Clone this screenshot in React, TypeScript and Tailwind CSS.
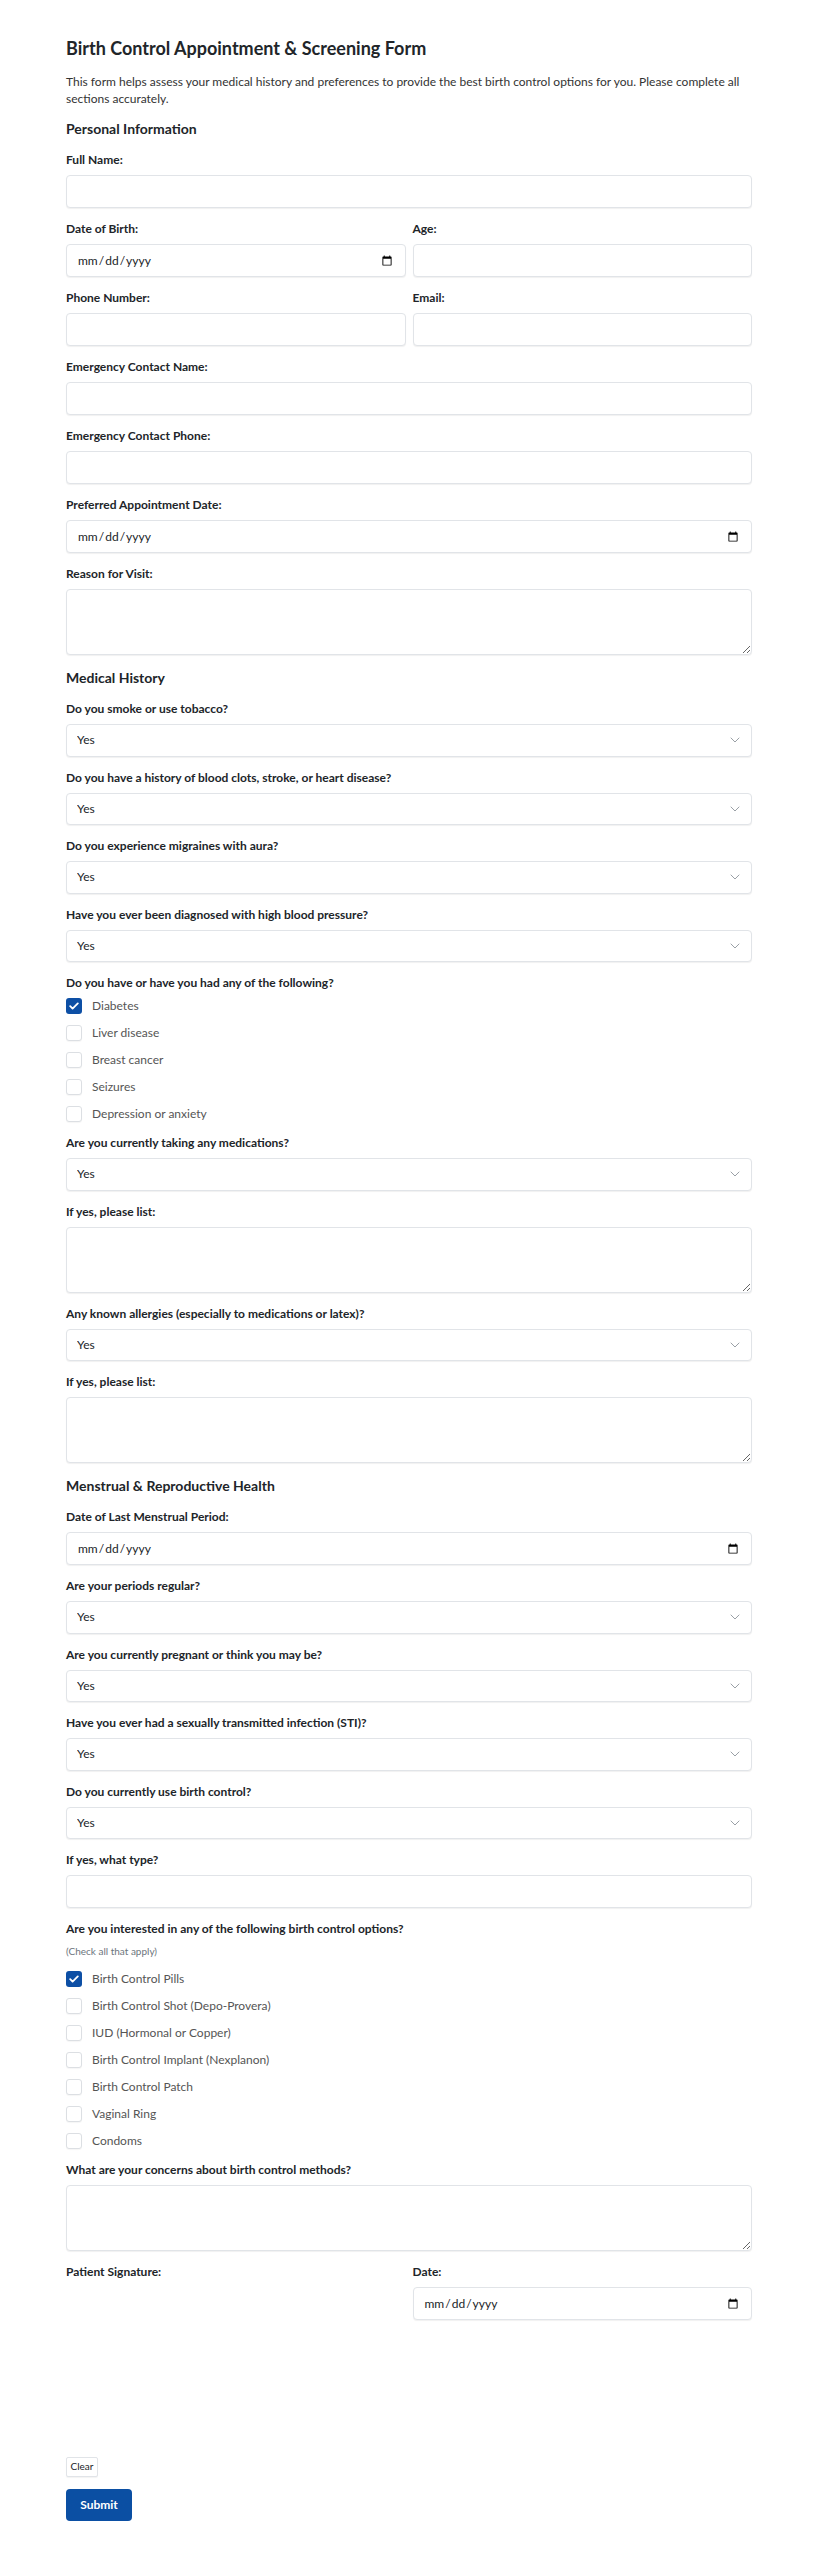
import React from 'react';

const fieldCls =
  'block w-full rounded-[4px] border border-[#e1e4e8] bg-white px-[10px] text-[12px] text-[#212529] shadow-[0_1px_1px_rgba(0,0,0,0.06)] outline-none';

function Label({ children }: { children: React.ReactNode }) {
  return <label className="block mb-[6px] text-[12px] leading-[18px] font-bold text-[#212529]">{children}</label>;
}

function TextField({ label, type = 'text' }: { label: string; type?: string }) {
  return (
    <div>
      <Label>{label}</Label>
      <input type={type} className={fieldCls + ' h-[33px]'} />
    </div>
  );
}

function TextArea({ label }: { label: string }) {
  return (
    <div>
      <Label>{label}</Label>
      <textarea className={fieldCls + ' h-[66px] py-[6px]'} />
    </div>
  );
}

function SelectField({ label }: { label: string }) {
  return (
    <div>
      <Label>{label}</Label>
      <div className="relative">
        <select defaultValue="Yes" className={fieldCls + ' h-[32.5px] appearance-none pr-8'}>
          <option>Yes</option>
          <option>No</option>
        </select>
        <svg
          className="pointer-events-none absolute right-[12px] top-1/2 -translate-y-1/2"
          width="10"
          height="6"
          viewBox="0 0 10 6"
          fill="none"
        >
          <path d="M1 1l4 4 4-4" stroke="#9aa0a6" strokeWidth="1" strokeLinecap="round" strokeLinejoin="round" />
        </svg>
      </div>
    </div>
  );
}

function Check({ label, checked = false }: { label: string; checked?: boolean }) {
  return (
    <div className="flex items-center h-[16px] gap-[10px]">
      {checked ? (
        <span className="flex items-center justify-center w-[16px] h-[16px] rounded-[3px] bg-[#0d4fa5]">
          <svg width="10" height="8" viewBox="0 0 10 8" fill="none">
            <path d="M1.2 4.2l2.4 2.4L8.8 1.4" stroke="white" strokeWidth="1.8" strokeLinecap="round" strokeLinejoin="round" />
          </svg>
        </span>
      ) : (
        <span className="w-[16px] h-[16px] rounded-[3px] border border-[#dcdfe3] bg-white shadow-[0_1px_1px_rgba(0,0,0,0.04)]" />
      )}
      <span className="text-[12px] text-[#555]">{label}</span>
    </div>
  );
}

function Heading({ children }: { children: React.ReactNode }) {
  return <h2 className="mt-[1px] text-[14px] leading-[20px] font-bold text-[#212529]">{children}</h2>;
}

export default function App() {
  return (
    <div className="min-h-screen bg-white font-['Lato','Liberation_Sans',sans-serif] text-[#212529]">
      <form className="ml-[66px] w-[686px] pt-[36px] pb-[40px]">
        <h1 className="text-[18px] leading-[24px] font-bold">Birth Control Appointment &amp; Screening Form</h1>
        <p className="mt-[13px] text-[12px] leading-[17px] text-[#333]">
          This form helps assess your medical history and preferences to provide the best birth control options for
          you. Please complete all sections accurately.
        </p>

        <div className="mt-[11px] flex flex-col gap-[12px]">
          <Heading>Personal Information</Heading>
          <TextField label="Full Name:" />
          <div className="grid grid-cols-2 gap-[7px]">
            <TextField label="Date of Birth:" type="date" />
            <TextField label="Age:" />
          </div>
          <div className="grid grid-cols-2 gap-[7px]">
            <TextField label="Phone Number:" />
            <TextField label="Email:" />
          </div>
          <TextField label="Emergency Contact Name:" />
          <TextField label="Emergency Contact Phone:" />
          <TextField label="Preferred Appointment Date:" type="date" />
          <TextArea label="Reason for Visit:" />

          <Heading>Medical History</Heading>
          <SelectField label="Do you smoke or use tobacco?" />
          <SelectField label="Do you have a history of blood clots, stroke, or heart disease?" />
          <SelectField label="Do you experience migraines with aura?" />
          <SelectField label="Have you ever been diagnosed with high blood pressure?" />
          <div>
            <Label>Do you have or have you had any of the following?</Label>
            <div className="flex flex-col gap-[11px]">
              <Check label="Diabetes" checked />
              <Check label="Liver disease" />
              <Check label="Breast cancer" />
              <Check label="Seizures" />
              <Check label="Depression or anxiety" />
            </div>
          </div>
          <SelectField label="Are you currently taking any medications?" />
          <TextArea label="If yes, please list:" />
          <SelectField label="Any known allergies (especially to medications or latex)?" />
          <TextArea label="If yes, please list:" />

          <Heading>Menstrual &amp; Reproductive Health</Heading>
          <TextField label="Date of Last Menstrual Period:" type="date" />
          <SelectField label="Are your periods regular?" />
          <SelectField label="Are you currently pregnant or think you may be?" />
          <SelectField label="Have you ever had a sexually transmitted infection (STI)?" />
          <SelectField label="Do you currently use birth control?" />
          <TextField label="If yes, what type?" />
          <div>
            <Label>Are you interested in any of the following birth control options?</Label>
            <div className="text-[10px] leading-[14px] text-[#6c757d]">(Check all that apply)</div>
            <div className="mt-[13px] flex flex-col gap-[11px]">
              <Check label="Birth Control Pills" checked />
              <Check label="Birth Control Shot (Depo-Provera)" />
              <Check label="IUD (Hormonal or Copper)" />
              <Check label="Birth Control Implant (Nexplanon)" />
              <Check label="Birth Control Patch" />
              <Check label="Vaginal Ring" />
              <Check label="Condoms" />
            </div>
          </div>
          <TextArea label="What are your concerns about birth control methods?" />

          <div className="grid grid-cols-2 gap-[7px]">
            <div>
              <Label>Patient Signature:</Label>
              <div className="h-[155px] mb-[10px]" />
              <button
                type="button"
                className="h-[20px] w-[32px] rounded-[2px] border border-[#e1e4e8] bg-white text-[10px] text-[#212529] shadow-[0_1px_1px_rgba(0,0,0,0.05)]"
              >
                Clear
              </button>
            </div>
            <TextField label="Date:" type="date" />
          </div>
        </div>

        <button
          type="submit"
          className="mt-[12px] h-[32px] w-[66px] rounded-[4px] bg-[#0b4fa3] text-[12px] font-bold text-white"
        >
          Submit
        </button>
      </form>
    </div>
  );
}
